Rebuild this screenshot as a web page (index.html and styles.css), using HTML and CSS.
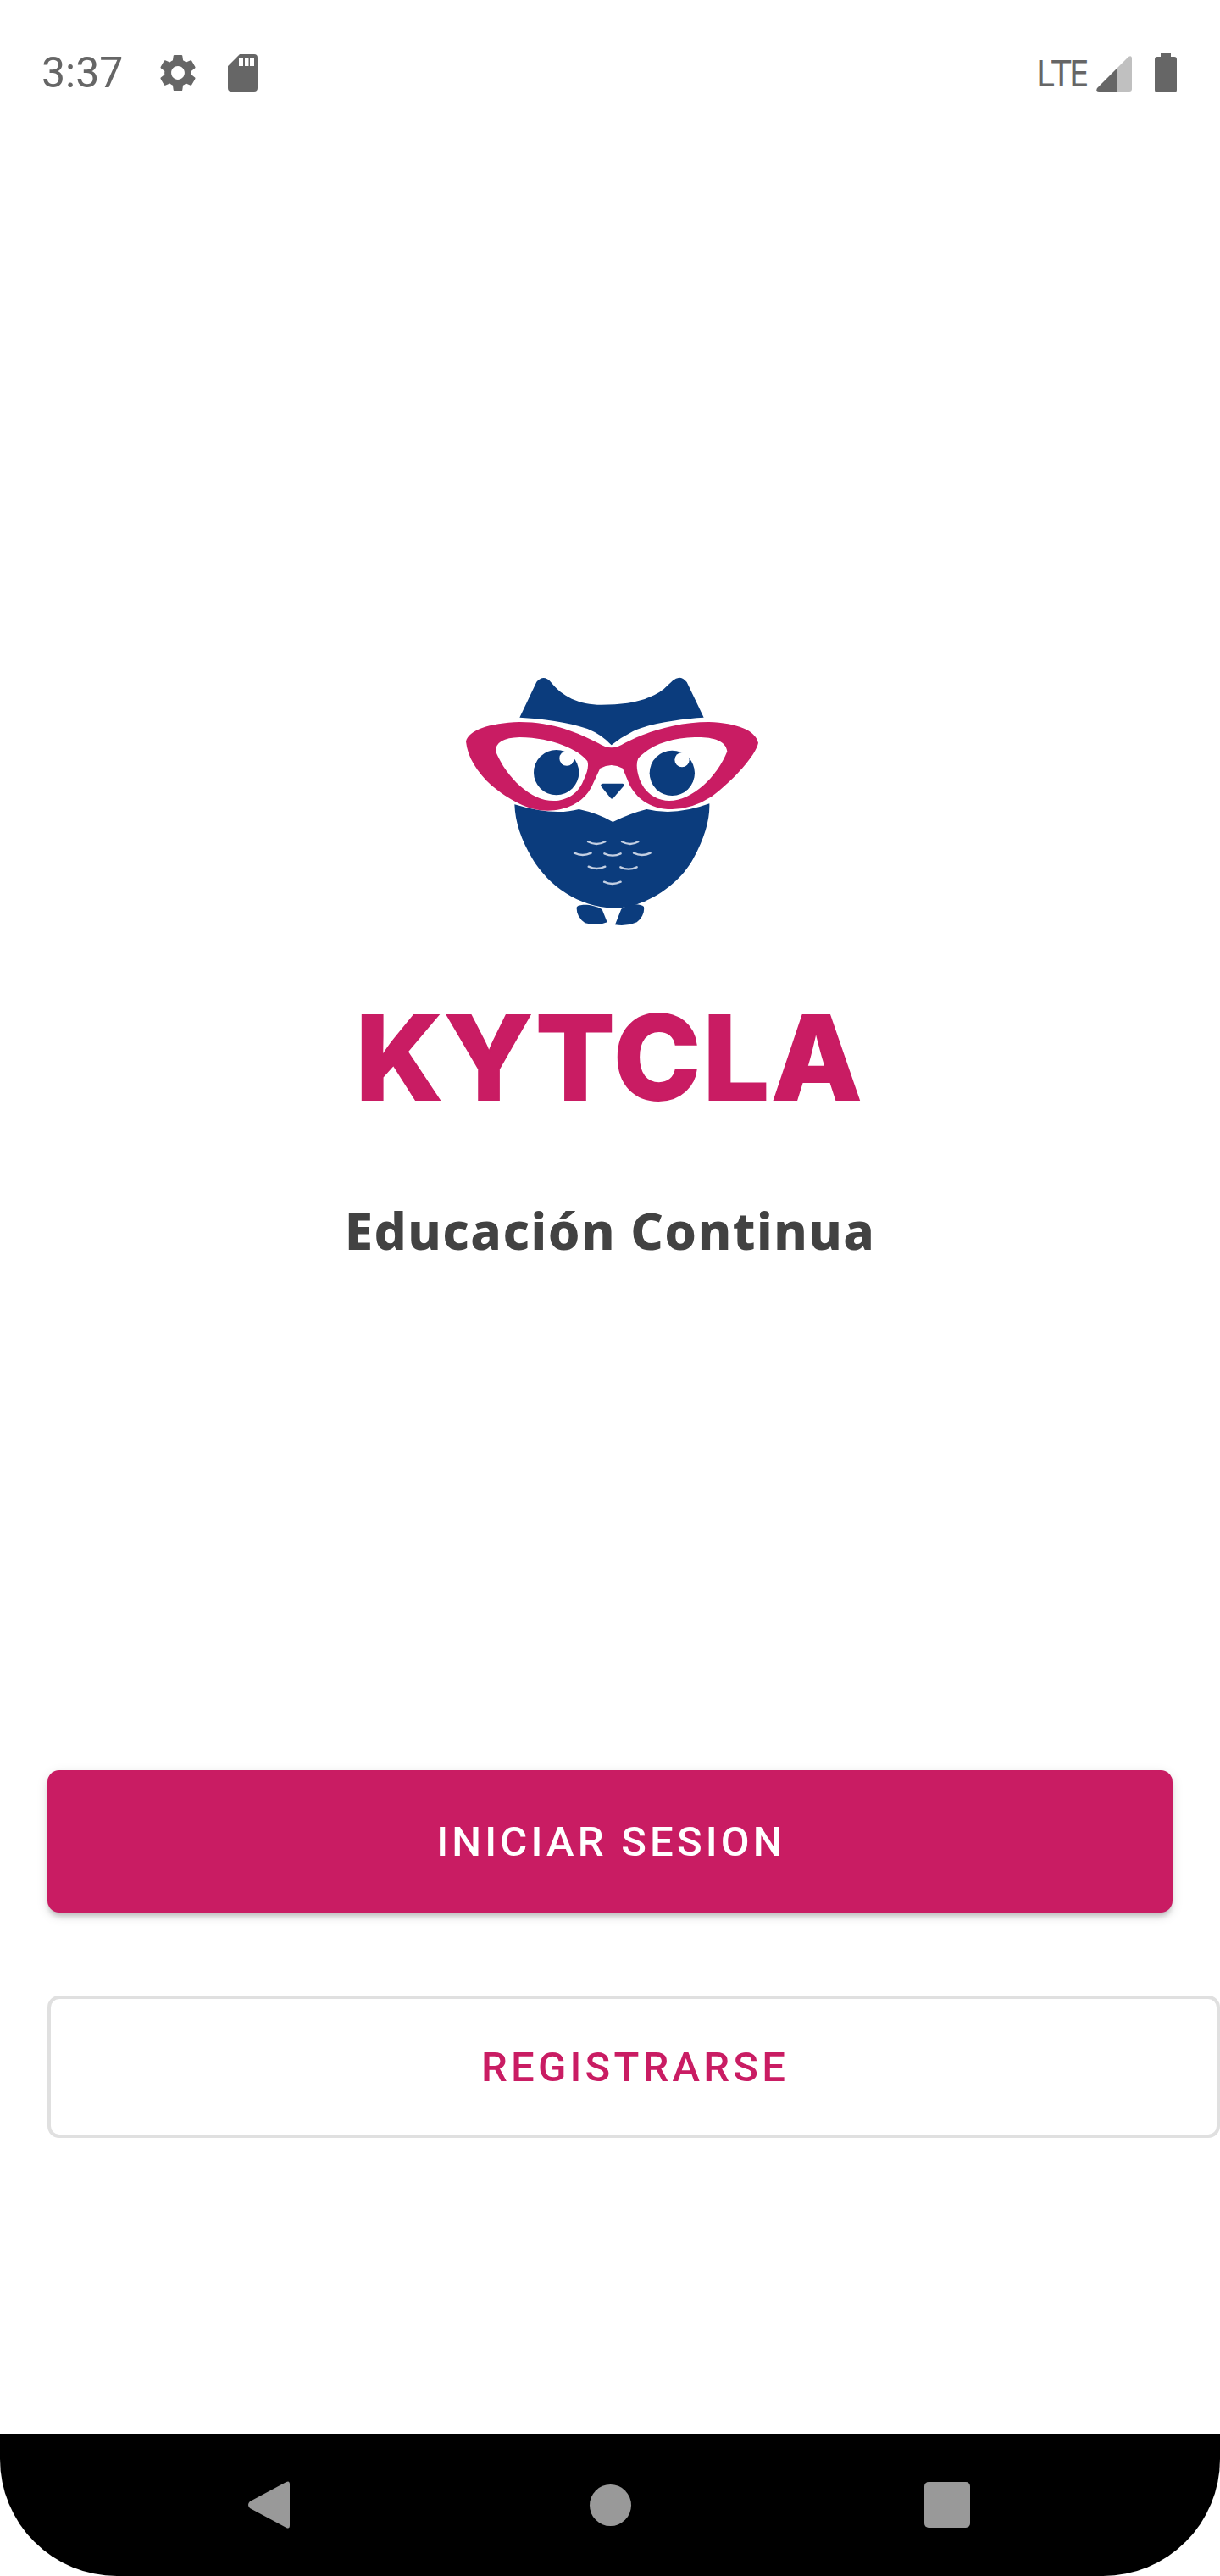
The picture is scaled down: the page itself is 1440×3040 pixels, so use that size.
FILE: index.html
```html
<!DOCTYPE html>
<html lang="es">
<head>
<meta charset="utf-8">
<title>KYTCLA</title>
<link rel="stylesheet" href="styles.css">
</head>
<body>
<div class="screen">
  <header class="status">
    <div class="status-left">
      <span class="time">3:37</span>
      <svg class="ic-gear" viewBox="2 2 20 20"><path fill="#666" d="M19.14 12.94c.04-.3.06-.61.06-.94 0-.32-.02-.64-.07-.94l2.03-1.58a.49.49 0 0 0 .12-.61l-1.92-3.32a.488.488 0 0 0-.59-.22l-2.39.96c-.5-.38-1.03-.7-1.62-.94l-.36-2.54a.484.484 0 0 0-.48-.41h-3.84c-.24 0-.43.17-.47.41l-.36 2.54c-.59.24-1.13.57-1.62.94l-2.39-.96c-.22-.08-.47 0-.59.22L2.74 8.87c-.12.21-.08.47.12.61l2.03 1.58c-.05.3-.09.63-.09.94s.02.64.07.94l-2.03 1.58a.49.49 0 0 0-.12.61l1.92 3.32c.12.22.37.29.59.22l2.39-.96c.5.38 1.03.7 1.62.94l.36 2.54c.05.24.24.41.48.41h3.84c.24 0 .44-.17.47-.41l.36-2.54c.59-.24 1.13-.56 1.62-.94l2.39.96c.22.08.47 0 .59-.22l1.92-3.32c.12-.22.07-.47-.12-.61l-2.01-1.58zM12 15.6c-1.98 0-3.6-1.62-3.6-3.6s1.62-3.6 3.6-3.6 3.6 1.62 3.6 3.6-1.62 3.6-3.6 3.6z"/></svg>
      <svg class="ic-sd" viewBox="0 0 35 44"><path fill="#666" fill-rule="evenodd" d="M14 0H31Q35 0 35 4V40Q35 44 31 44H4Q0 44 0 40V14ZM13 4.500V14H18V4.500ZM20 4.500V14H24.500V4.500ZM26 4.500V14H31V4.500Z"/></svg>
    </div>
    <div class="status-right">
      <span class="lte">LTE</span>
      <svg class="ic-signal" viewBox="0 0 42 42"><path fill="#c0c0c0" d="M24 15L38 1Q42 -1 42 3V39Q42 42 39 42H24Z"/><path fill="#666" d="M24 15V42H3Q-1 42 1 38Z"/></svg>
      <svg class="ic-battery" viewBox="0 0 26 46"><path fill="#666" d="M7 0H19V4H23Q26 4 26 7V43Q26 46 23 46H3Q0 46 0 43V7Q0 4 3 4H7Z"/></svg>
    </div>
  </header>

  <main class="brand">
    <svg class="owl" viewBox="0 0 1200 960">
      <g fill="#0b3c7d">
        <path d="M280 200L340 74Q365 46 390 74C430 125 490 155 570 155C660 155 740 140 790 100L822 70Q848 46 872 75L932 200C850 205 730 222 680 250Q640 270 605 298Q570 260 520 240C450 215 360 205 280 200Z"/>
        <path d="M262 508Q400 550 490 525Q560 540 610 570Q670 540 730 525Q830 550 952 505Q955 590 895 700C840 800 720 875 610 875C490 870 385 800 325 700Q265 600 262 508Z"/>
        <path d="M482 872C490 858 545 862 572 880L590 925Q555 940 512 928Q480 905 482 872Z"/>
        <path d="M720 870C705 856 665 860 640 878L618 934Q660 940 695 925Q724 900 720 870Z"/>
      </g>
      <path fill="#c91c63" fill-rule="evenodd" d="M90 285C100 245 170 220 280 216C400 216 490 255 560 292Q605 322 650 292C720 255 830 216 950 216C1050 220 1115 245 1125 290C1115 335 1040 420 960 480Q890 525 820 525C750 525 700 495 670 440L645 380Q605 358 565 380L535 445C505 505 440 530 380 530C310 530 240 490 180 440C130 395 95 340 90 285ZM195 320C235 415 320 495 400 495C450 495 490 465 505 425Q528 380 520 355C490 315 400 272 280 270Q195 272 195 320ZM1015 320C1010 280 960 268 900 270C820 272 745 295 700 345Q688 370 705 420C725 470 765 495 810 495C890 495 980 410 1015 320Z"/>
      <circle cx="410" cy="395" r="80" fill="#0b3c7d"/>
      <circle cx="447" cy="345" r="26" fill="#fff"/>
      <circle cx="820" cy="397" r="80" fill="#0b3c7d"/>
      <circle cx="855" cy="350" r="26" fill="#fff"/>
      <path fill="#0b3c7d" d="M575 434H645Q652 436 648 443L612 485Q607 490 602 485L568 443Q565 436 575 434Z"/>
      <g class="feathers" fill="none" stroke="#c3cfe2" stroke-width="7" stroke-linecap="round">
        <path d="M522 640Q552 656 583 640"/>
        <path d="M642 640Q672 656 700 640"/>
        <path d="M474 680Q503 694 533 680"/>
        <path d="M580 682Q610 696 638 682"/>
        <path d="M684 680Q713 694 743 680"/>
        <path d="M524 728Q553 742 583 728"/>
        <path d="M637 730Q665 744 695 730"/>
        <path d="M579 782Q608 796 638 782"/>
      </g>
    </svg>
    <div class="wordmark">KYTCLA</div>
    <h1 class="tagline">Educación Continua</h1>
  </main>

  <section class="actions">
    <button class="btn btn-primary">INICIAR SESION</button>
    <button class="btn btn-outline">REGISTRARSE</button>
  </section>

  <nav class="navbar">
    <svg class="nav-back" viewBox="0 0 50 56"><path fill="#999" d="M46 1Q50 -1 50 4V52Q50 57 46 55L3 32Q-1 28 3 24Z"/></svg>
    <span class="nav-home"></span>
    <span class="nav-recent"></span>
  </nav>
</div>
</body>
</html>
```
FILE: styles.css
```css
* { box-sizing: border-box; }
html, body { margin: 0; padding: 0; background: #fff; }
.screen {
  width: 1440px;
  height: 3040px;
  overflow: hidden;
  display: flex;
  flex-direction: column;
  font-family: Roboto, "Liberation Sans", sans-serif;
}
.status {
  display: flex;
  justify-content: space-between;
  align-items: center;
  height: 52px;
  margin-top: 60px;
  padding: 0 51px 0 49px;
}
.status-left, .status-right { display: flex; align-items: center; }
.time { font-size: 50px; line-height: 52px; color: #666; width: 139px; }
.ic-gear { width: 44px; height: 44px; }
.ic-sd { width: 35px; height: 44px; margin-left: 37px; }
.lte { font-size: 43px; line-height: 52px; color: #666; font-family: "Noto Sans", sans-serif; letter-spacing: -3.300px; }
.ic-signal { width: 42px; height: 42px; margin-left: 12px; margin-top: 2px; }
.ic-battery { width: 26px; height: 46px; margin-left: 27px; }

.brand { display: flex; flex-direction: column; align-items: center; margin-top: 668px; }
.owl { width: 400px; height: 320px; filter: blur(0.7px); }
.wordmark {
  margin-top: 88px;
  font-family: Inter, sans-serif;
  font-weight: 800;
  font-size: 138px;
  line-height: 120px;
  letter-spacing: 3px;
  -webkit-text-stroke: 2px #c91c63;
  color: #c91c63;
  filter: blur(0.6px);
}
.tagline {
  margin: 109px 0 0;
  font-family: "Noto Sans", sans-serif;
  font-weight: 800;
  font-size: 60px;
  line-height: 70px;
  letter-spacing: 1.500px;
  color: #424242;
}

.actions { display: flex; flex-direction: column; margin-top: 602px; padding-left: 56px; }
.btn {
  display: block;
  height: 168px;
  padding: 0 0 0 3px;
  font-family: Roboto, sans-serif;
  font-weight: 500;
  font-size: 49px;
  letter-spacing: 4.200px;
  border-radius: 14px;
}
.btn-primary {
  width: 1328px;
  background: #c91c63;
  color: #fff;
  border: 0;
  box-shadow: 0 6px 6px -2px rgba(0,0,0,.2), 0 4px 14px rgba(0,0,0,.12);
}
.btn-outline {
  width: 1384px;
  margin-top: 98px;
  background: #fff;
  color: #c91c63;
  border: 4px solid #e0e0e0;
}

.navbar {
  position: relative;
  margin-top: auto;
  height: 168px;
  background: #000;
  border-radius: 0 0 138px 138px;
  display: grid;
  grid-template-columns: 1fr 1fr 1fr;
  align-items: center;
  justify-items: center;
}
.nav-back { width: 50px; height: 56px; justify-self: start; margin-left: 292px; }
.nav-home { width: 49px; height: 49px; border-radius: 50%; background: #999; }
.nav-recent { width: 54px; height: 54px; border-radius: 5px; background: #999; justify-self: end; margin-right: 295px; }
```
